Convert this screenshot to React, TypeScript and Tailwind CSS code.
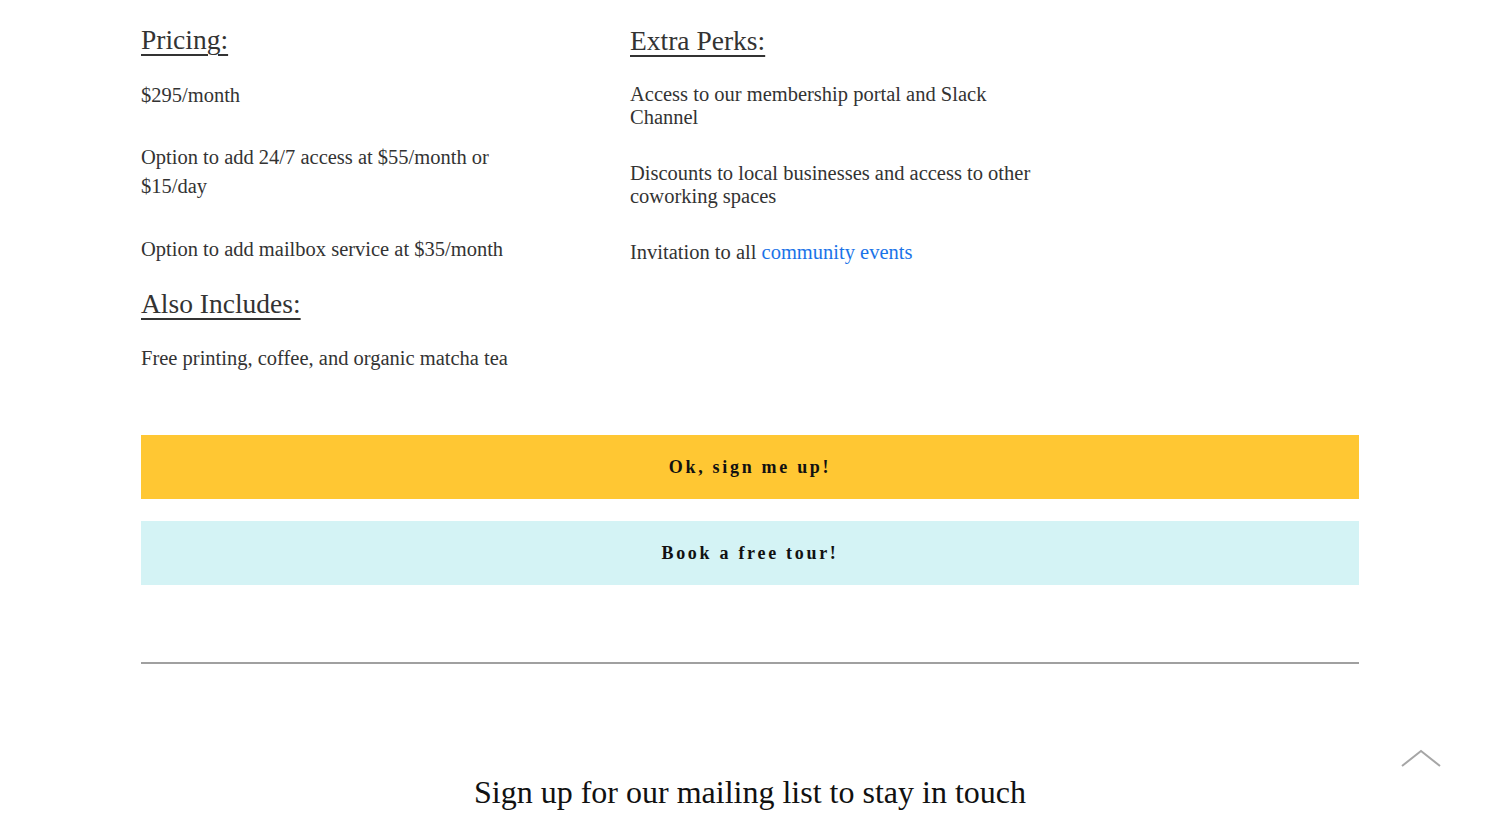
import React from "react";

const serif = { fontFamily: '"Liberation Serif", "DejaVu Serif", serif' };

export default function App() {
  return (
    <div className="relative w-[1500px] h-[832px] overflow-hidden bg-white text-[#333333]" style={serif}>
      <div className="mx-auto w-[1218px]">
        <div className="flex">
          <div className="w-[489px] pt-[24px]">
            <div className="w-[410px]">
              <h2 className="text-[27.5px] leading-[32px] underline underline-offset-[5px] decoration-[1.5px]">Pricing:</h2>
              <p className="mt-[25px] text-[20.5px] leading-[29px]">$295/month</p>
              <p className="mt-[33px] text-[20.5px] leading-[29px]">Option to add 24/7 access at $55/month or $15/day</p>
              <p className="mt-[34px] text-[20.5px] leading-[29px]">Option to add mailbox service at $35/month</p>
              <h2 className="mt-[24px] text-[27.5px] leading-[32px] underline underline-offset-[5px] decoration-[1.5px]">Also Includes:</h2>
              <p className="mt-[24px] text-[20.5px] leading-[29px]">Free printing, coffee, and organic matcha tea</p>
            </div>
          </div>
          <div className="w-[420px] pt-[25px]">
            <h2 className="text-[27.5px] leading-[32px] underline underline-offset-[5px] decoration-[1.5px]">Extra Perks:</h2>
            <p className="mt-[26px] text-[20.5px] leading-[23px]">Access to our membership portal and Slack Channel</p>
            <p className="mt-[33px] text-[20.5px] leading-[23px]">Discounts to local businesses and access to other coworking spaces</p>
            <p className="mt-[33px] text-[20.5px] leading-[23px]">
              Invitation to all <a className="text-[#1a73e8]" href="#">community events</a>
            </p>
          </div>
        </div>

        <button className="mt-[62px] flex h-[64px] w-full items-center justify-center bg-[#ffc733] text-[18px] font-bold tracking-[2.7px] text-[#111111]">
          Ok, sign me up!
        </button>
        <button className="mt-[22px] flex h-[64px] w-full items-center justify-center bg-[#d4f3f5] text-[18px] font-bold tracking-[2.7px] text-[#111111]">
          Book a free tour!
        </button>

        <div className="mt-[77px] h-[2px] w-full bg-[#a0a0a0]" />

        <h3 className="mt-[110px] text-center text-[32px] leading-[36px] text-[#111111]">
          Sign up for our mailing list to stay in touch
        </h3>
      </div>

      <svg className="absolute left-[1401px] top-[748px]" width="40" height="20" viewBox="0 0 40 20" fill="none">
        <polyline points="1,18 20,3 39,18" stroke="#a6a6a6" strokeWidth="2" />
      </svg>
    </div>
  );
}
